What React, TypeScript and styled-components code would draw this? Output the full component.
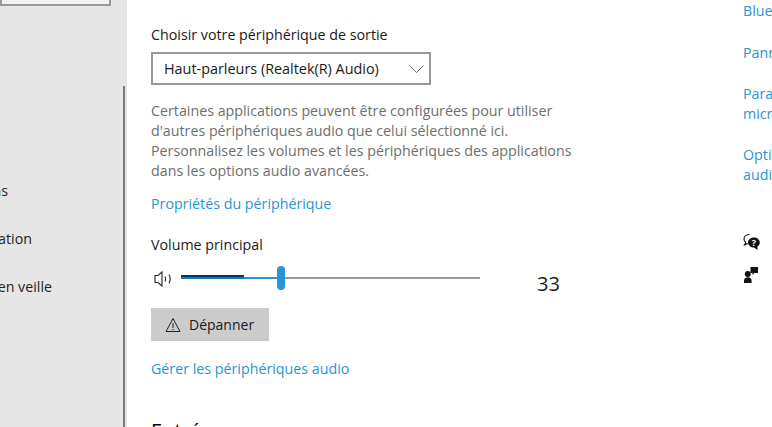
import styled, { createGlobalStyle } from "styled-components";

const GlobalStyle = createGlobalStyle`
  html, body {
    margin: 0;
    padding: 0;
    height: 100%;
    background: #ffffff;
  }
  #root {
    height: 100%;
  }
`;

const Page = styled.div`
  display: flex;
  width: 772px;
  height: 427px;
  overflow: hidden;
  font-family: "Open Sans", "Noto Sans", sans-serif;
  font-size: 14.25px;
  color: #1a1a1a;
  background: #ffffff;
`;

const Sidebar = styled.nav`
  position: relative;
  flex: 0 0 127px;
  overflow: hidden;
  background: #e6e6e6;
`;

const SearchBox = styled.div`
  width: 111px;
  height: 30px;
  margin-top: -24px;
  box-sizing: border-box;
  border: 2px solid #999999;
  background: #f2f2f2;
`;

const NavList = styled.ul`
  list-style: none;
  margin: 175px 0 0;
  padding: 0;
  display: flex;
  flex-direction: column;
  gap: 28px;
`;

const NavItem = styled.li<{ $end: number }>`
  width: ${(p) => p.$end}px;
  height: 20px;
  line-height: 20px;
  display: flex;
  justify-content: flex-end;
  white-space: nowrap;
  color: #1f1f1f;
`;

const ScrollThumb = styled.div`
  position: absolute;
  right: 2px;
  top: 86px;
  bottom: 0;
  width: 2px;
  background: #7a7a7a;
`;

const Main = styled.main`
  flex: 0 0 616px;
  box-sizing: border-box;
  padding: 25px 0 0 24px;
`;

const Label = styled.div<{ $top?: number }>`
  margin-top: ${(p) => p.$top ?? 0}px;
  line-height: 20px;
  color: #1a1a1a;
`;

const Select = styled.div`
  display: flex;
  align-items: center;
  justify-content: space-between;
  box-sizing: border-box;
  width: 280px;
  height: 33px;
  margin-top: 7px;
  padding: 0 5px 0 11px;
  border: 2px solid #999999;
  font-size: 14.4px;
  color: #1a1a1a;
`;

const Chevron = styled.svg`
  width: 15px;
  height: 8px;
`;

const Description = styled.p`
  width: 440px;
  margin: 16px 0 0;
  line-height: 20px;
  color: #6e6e6e;
`;

const LinkText = styled.a<{ $top: number }>`
  display: block;
  margin-top: ${(p) => p.$top}px;
  line-height: 20px;
  color: #2b95d0;
`;

const VolumeRow = styled.div`
  display: flex;
  align-items: center;
  height: 26px;
  margin-top: 9px;
`;

const SpeakerIcon = styled.svg`
  flex: 0 0 18px;
  width: 18px;
  height: 18px;
  margin: 3px 9px 0 3px;
`;

const Slider = styled.div`
  position: relative;
  display: flex;
  width: 299px;
  height: 2px;
  margin-top: 2px;
  background: #999999;
`;

const SliderFill = styled.div`
  height: 100%;
  background: #2b95d0;
`;

const PeakBar = styled.div`
  position: absolute;
  left: 0;
  top: -2px;
  height: 2px;
  background: #03395a;
  box-shadow: 0 2px 0 #1a78b0;
`;

const SliderThumb = styled.div`
  position: absolute;
  top: -11px;
  width: 8px;
  height: 24px;
  margin-left: -4px;
  border-radius: 4px;
  background: #2b95d0;
`;

const VolumeValue = styled.div`
  margin-left: 57px;
  margin-top: 13px;
  font-size: 20px;
  line-height: 26px;
  color: #1a1a1a;
`;

const TroubleshootButton = styled.button`
  display: flex;
  align-items: center;
  gap: 8px;
  width: 118px;
  height: 33px;
  margin-top: 18px;
  padding: 0 0 0 14px;
  border: none;
  background: #cccccc;
  color: #1a1a1a;
  font-family: inherit;
  font-size: 14px;
`;

const SectionTitle = styled.div`
  margin-top: 42px;
  line-height: 20px;
  font-size: 20px;
  color: #000000;
`;

const Aside = styled.aside`
  flex: 1;
  min-width: 0;
  overflow: hidden;
`;

const AsideLink = styled.a<{ $top: number }>`
  display: block;
  width: 260px;
  margin-top: ${(p) => p.$top}px;
  line-height: 20px;
  color: #2b95d0;
`;

const AsideIcon = styled.svg<{ $top: number }>`
  display: block;
  width: 18px;
  height: 18px;
  margin-top: ${(p) => p.$top}px;
`;

export default function App() {
  return (
    <>
      <GlobalStyle />
      <Page>
        <Sidebar>
          <SearchBox />
          <NavList>
            <NavItem $end={8}>Notifications et actions</NavItem>
            <NavItem $end={32}>Assistant de concentration</NavItem>
            <NavItem $end={52}>Alimentation et mise en veille</NavItem>
          </NavList>
          <ScrollThumb />
        </Sidebar>
        <Main>
          <Label>Choisir votre périphérique de sortie</Label>
          <Select>
            <span>Haut-parleurs (Realtek(R) Audio)</span>
            <Chevron viewBox="0 0 15 8" fill="none" stroke="#555" strokeWidth="0.9">
              <path d="M0.500 0.500l7 7 7-7" />
            </Chevron>
          </Select>
          <Description>
            Certaines applications peuvent être configurées pour utiliser d'autres périphériques audio que celui
            sélectionné ici. Personnalisez les volumes et les périphériques des applications dans les options audio
            avancées.
          </Description>
          <LinkText $top={13}>Propriétés du périphérique</LinkText>
          <Label $top={21}>Volume principal</Label>
          <VolumeRow>
            <SpeakerIcon viewBox="0 0 18 18" fill="none" stroke="#222" strokeWidth="1.1">
              <path d="M1 5.500h3L8 2v14L4 12.500H1z" />
              <path d="M11 6.500c.8 1.500.8 3.500 0 5" />
              <path d="M15 4.500c1.500 2.800 1.500 6.200 0 9" />
            </SpeakerIcon>
            <Slider>
              <SliderFill style={{ width: 100 }} />
              <PeakBar style={{ width: 63 }} />
              <SliderThumb style={{ left: 100 }} />
            </Slider>
            <VolumeValue>33</VolumeValue>
          </VolumeRow>
          <TroubleshootButton>
            <svg width="16" height="16" viewBox="0 0 16 16" fill="none" stroke="#222" strokeWidth="1">
              <path d="M8 1.500L15 14.500H1z" />
              <path d="M8 6v5M8 12v1.200" />
            </svg>
            Dépanner
          </TroubleshootButton>
          <LinkText $top={18}>Gérer les périphériques audio</LinkText>
          <SectionTitle>Entrée</SectionTitle>
        </Main>
        <Aside>
          <AsideLink $top={1}>Bluetooth et autres périphériques</AsideLink>
          <AsideLink $top={22}>Panneau de configuration Son</AsideLink>
          <AsideLink $top={21}>
            Paramètres de confidentialité du
            <br />
            microphone
          </AsideLink>
          <AsideLink $top={21}>
            Options d'ergonomie pour les options
            <br />
            audio
          </AsideLink>
          <AsideIcon $top={48} viewBox="0 0 18 18">
            <path d="M6.500 1.500C3.500 1.500 1 3.400 1 6c0 1.400.7 2.600 1.800 3.400L1.500 11.800l3.300-1.400" fill="none" stroke="#111" strokeWidth="1.100" />
            <path d="M11 4.500c-3.300 0-6 2.100-6 5s2.700 5 6 5l3.500 2.500v-3.400c1.400-.9 2.300-2.400 2.300-4.100 0-2.900-2.600-5-5.800-5z" fill="#111" />
            <text x="11" y="12.800" fontSize="9" fontWeight="700" fill="#fff" textAnchor="middle" fontFamily="Open Sans">?</text>
          </AsideIcon>
          <AsideIcon $top={15} viewBox="0 0 18 18">
            <circle cx="4.800" cy="8" r="3" fill="#111" />
            <path d="M1 17v-2.500c0-2 1.500-3.300 3.800-3.300s3.800 1.300 3.800 3.300V17z" fill="#111" />
            <path d="M7.500 1H15v6h-3.500L9.500 9V7h-2z" fill="#111" />
          </AsideIcon>
        </Aside>
      </Page>
    </>
  );
}
